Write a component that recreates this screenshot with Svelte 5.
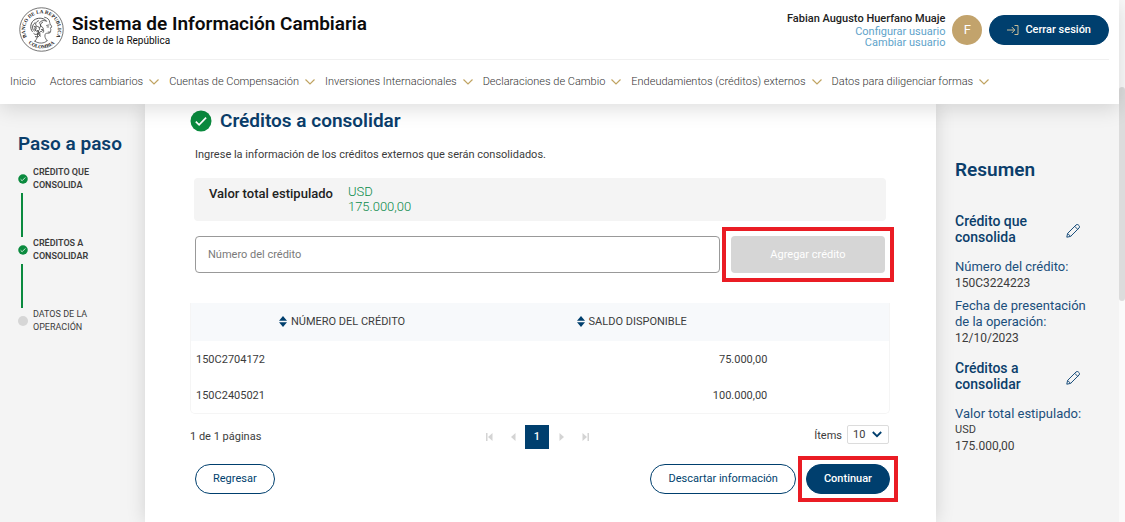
<script>
  const menu = [
    { label: 'Inicio', sub: false },
    { label: 'Actores cambiarios', sub: true },
    { label: 'Cuentas de Compensación', sub: true },
    { label: 'Inversiones Internacionales', sub: true },
    { label: 'Declaraciones de Cambio', sub: true },
    { label: 'Endeudamientos (créditos) externos', sub: true },
    { label: 'Datos para diligenciar formas', sub: true }
  ];

  const steps = [
    { lines: ['Crédito que', 'consolida'], done: true },
    { lines: ['Créditos a', 'consolidar'], done: true },
    { lines: ['Datos de la', 'operación'], done: false }
  ];

  const rows = [
    { id: '150C2704172', balance: '75.000,00' },
    { id: '150C2405021', balance: '100.000,00' }
  ];

  const summary = [
    {
      title: 'Crédito que consolida',
      items: [
        { label: 'Número del crédito:', values: ['150C3224223'] },
        { label: 'Fecha de presentación de la operación:', values: ['12/10/2023'] }
      ]
    },
    {
      title: 'Créditos a consolidar',
      items: [{ label: 'Valor total estipulado:', currency: 'USD', values: ['175.000,00'] }]
    }
  ];

  let creditNumber = $state('');
  let pageSize = $state('10');
</script>

{#snippet check()}
  <svg class="check" viewBox="0 0 22 22" aria-hidden="true">
    <circle cx="11" cy="11" r="10.5" fill="#0a8a3e" />
    <path d="M5.8 11.6l3.3 3.2 7-7.2" fill="none" stroke="#fff" stroke-width="1.7" />
  </svg>
{/snippet}

<div class="page">
  <div class="view">
    <header>
      <div class="top">
        <svg class="seal" viewBox="0 0 88 88" aria-hidden="true">
          <defs>
            <path id="arc-top" d="M15.500 59A32 32 0 1 1 72.500 59" />
            <path id="arc-low" d="M13 65A38 38 0 0 0 75 65" />
          </defs>
          <circle cx="44" cy="44" r="42.5" fill="#fff" stroke="#555" stroke-width="1.6" />
          <text class="seal-text"><textPath href="#arc-top" startOffset="50%" text-anchor="middle">BANCO DE LA REPUBLICA</textPath></text>
          <text class="seal-text"><textPath href="#arc-low" startOffset="50%" text-anchor="middle">COLOMBIA</textPath></text>
          <g fill="none" stroke="#444" stroke-width="1.5" stroke-linecap="round" stroke-linejoin="round">
            <path d="M50 20c6 1 10 5 10 10 0 3 4 7 4 9s-3 1-3 2 2 2 1 4c0 2 0 5-3 6-4 1-7-1-8 3s0 7 4 12" />
            <path d="M36 51c1 6 0 11-5 16M31 67c8 5 18 5 24-1" />
            <path d="M26 48c-6-7-3-20 6-24 8-4 18-2 22 4-6-3-12-1-14 3M31 31c-6 4-6 13-1 16M38 27c-7 2-7 10-2 11s6 7 1 9-9-5-4-9M46 30c-5 2-5 7-1 9s3 8-2 9-6 7-1 9M29 52c4 4 9 1 9-4M32 58c5 2 10-1 9-6M44 44c4-1 6 3 3 6M30 38c4 0 5 5 2 7M41 33c3 3 1 6-1 8M36 46c5 3 3 7 0 9" stroke-width="1.8" />
            <path d="M54 36l5-1M55 39l3 0M57 49l4 0" />
          </g>
          <circle cx="9" cy="57" r="1.3" fill="#333" /><circle cx="79" cy="57" r="1.3" fill="#333" />
        </svg>
        <div class="brand">
          <strong>Sistema de Información Cambiaria</strong>
          <span>Banco de la República</span>
        </div>
        <div class="user">
          <strong>Fabian Augusto Huerfano Muaje</strong>
          <a href="#configurar">Configurar usuario</a>
          <a href="#cambiar">Cambiar usuario</a>
        </div>
        <span class="avatar">F</span>
        <button class="pill solid logout" type="button">
          <svg viewBox="0 0 12 12" aria-hidden="true">
            <path d="M0 6h7.500M4.800 3l3 3-3 3M7.500 1.500h3.500v9H7.500" fill="none" stroke="#c9bd98" stroke-width="1" />
          </svg>
          Cerrar sesión
        </button>
      </div>
      <nav aria-label="Principal">
        {#each menu as item}
          <a href="#menu">
            {item.label}
            {#if item.sub}
              <svg viewBox="0 0 10 6" aria-hidden="true"><path d="M.5.5L5 5 9.500.5" fill="none" stroke="#c0a462" stroke-width="1.200" /></svg>
            {/if}
          </a>
        {/each}
      </nav>
    </header>

    <div class="body">
      <aside class="steps">
        <h2>Paso a paso</h2>
        <ol>
          {#each steps as step, i}
            <li class:done={step.done}>
              <div class="step">
                {#if step.done}{@render check()}{:else}<span class="dot"></span>{/if}
                <span>{step.lines[0]}<br />{step.lines[1]}</span>
              </div>
              {#if i < steps.length - 1}<div class="line"></div>{/if}
            </li>
          {/each}
        </ol>
      </aside>

      <main>
        <div class="title">
          {@render check()}
          <h1>Créditos a consolidar</h1>
        </div>
        <p class="intro">Ingrese la información de los créditos externos que serán consolidados.</p>

        <div class="total">
          <strong>Valor total estipulado</strong>
          <span>USD<br />175.000,00</span>
        </div>

        <form class="add" onsubmit={(e) => e.preventDefault()}>
          <input type="text" aria-label="Número del crédito" placeholder="Número del crédito" bind:value={creditNumber} />
          <div class="marked">
            <button type="submit" disabled={!creditNumber}>Agregar crédito</button>
          </div>
        </form>

        <div class="table">
          <table>
            <colgroup><col class="c1" /><col class="c2" /><col /></colgroup>
            <thead>
              <tr>
                {#each ['Número del crédito', 'Saldo disponible'] as name}
                  <th scope="col">
                    <button type="button">
                      <svg viewBox="0 0 8 11" aria-hidden="true"><path d="M4 0l4 4.800H0zM4 11l4-4.800H0z" fill="#003f6e" /></svg>
                      {name}
                    </button>
                  </th>
                {/each}
                <td></td>
              </tr>
            </thead>
            <tbody>
              {#each rows as row}
                <tr><td>{row.id}</td><td class="num">{row.balance}</td><td></td></tr>
              {/each}
            </tbody>
          </table>
        </div>

        <div class="paging">
          <span>1 de 1 páginas</span>
          <div class="pager">
            <button type="button" disabled aria-label="Primera página"><svg viewBox="0 0 7 8"><path d="M0 0h1.500v8H0zM6.500 0v8l-4.500-4z" /></svg></button>
            <button type="button" disabled aria-label="Página anterior"><svg viewBox="0 0 7 8"><path d="M5.500 0v8L1 4z" /></svg></button>
            <button type="button" class="current">1</button>
            <button type="button" disabled aria-label="Página siguiente"><svg viewBox="0 0 7 8"><path d="M1.500 0v8L6 4z" /></svg></button>
            <button type="button" disabled aria-label="Última página"><svg viewBox="0 0 7 8"><path d="M5.500 0H7v8H5.500zM.5 0v8L5 4z" /></svg></button>
          </div>
          <div class="size">
            <label for="size">Ítems</label>
            <div class="select">
              <select id="size" bind:value={pageSize}>
                <option>10</option>
                <option>20</option>
                <option>50</option>
              </select>
              <svg viewBox="0 0 10 7" aria-hidden="true"><path d="M.8 1L5 5.200 9.200 1" fill="none" stroke="#003f6e" stroke-width="1.800" /></svg>
            </div>
          </div>
        </div>

        <div class="actions">
          <button class="pill back" type="button">Regresar</button>
          <button class="pill" type="button">Descartar información</button>
          <div class="marked tight"><button class="pill solid" type="button">Continuar</button></div>
        </div>
      </main>

      <aside class="summary">
        <h2>Resumen</h2>
        {#each summary as group}
          <section>
            <div class="group">
              <h3>{group.title}</h3>
              <button type="button" aria-label="Editar">
                <svg viewBox="0 0 14 14" aria-hidden="true">
                  <path d="M.8 13.200l.8-3.800L10 1a1.700 1.700 0 0 1 2.400 0l.6.600a1.700 1.700 0 0 1 0 2.400L4.600 12.400zM8.700 2.300l3 3M1.600 9.400l3 3" fill="none" stroke="#1b4f7c" stroke-width="1" stroke-linejoin="round" />
                </svg>
              </button>
            </div>
            <dl>
              {#each group.items as item}
                <div>
                  <dt>{item.label}</dt>
                  {#if item.currency}<dd class="currency">{item.currency}</dd>{/if}
                  {#each item.values as value}<dd>{value}</dd>{/each}
                </div>
              {/each}
            </dl>
          </section>
        {/each}
      </aside>
    </div>
  </div>
  <div class="track"><div class="thumb"></div></div>
</div>

<style>
  :global(body) {
    margin: 0;
    font-family: Roboto, 'Liberation Sans', sans-serif;
    font-size: 11px;
    line-height: 16px;
    color: #3c3c3c;
    background: #fff;
  }
  * { box-sizing: border-box; }
  button, input, select { font: inherit; color: inherit; margin: 0; }
  button { border: 0; background: none; padding: 0; cursor: pointer; }
  h1, h2, h3, p, ol, dl, dd { margin: 0; padding: 0; }
  h1, h2 { color: #0b3e6b; font-size: 19px; line-height: 24px; font-weight: 600; }
  a { color: inherit; text-decoration: none; }
  svg { display: block; flex: none; }

  .page { display: flex; min-height: 100vh; }
  .view { flex: 1; min-width: 0; display: flex; flex-direction: column; }
  .track { width: 6px; background: #fafafa; padding-top: 87px; }
  .thumb { height: 214px; border-radius: 3px; background: #dcdcdc; }

  header {
    position: relative;
    z-index: 2;
    background: #fff;
    padding: 0 10px;
    box-shadow: 0 4px 20px rgba(0, 0, 0, 0.14);
  }
  .top {
    display: flex;
    align-items: center;
    height: 60px;
    padding-left: 9px;
    border-bottom: 1px solid #f0f0f0;
  }
  .seal { width: 45px; height: 45px; }
  .seal-text { font: bold 10px 'Liberation Serif', serif; fill: #222; }
  .brand { display: flex; flex-direction: column; margin: 0 auto 0 8px; color: #0c0c0c; }
  .brand strong { font-size: 19px; line-height: 22px; font-weight: 600; }
  .brand span { font-size: 10px; line-height: 12px; }
  .user { display: flex; flex-direction: column; text-align: right; line-height: 11px; color: #5ea3ca; }
  .user strong { font-weight: 500; line-height: 14px; color: #222; }
  .avatar {
    width: 30px;
    height: 30px;
    margin: 0 7px;
    border-radius: 50%;
    background: #c2a36c;
    color: #fff;
    font-size: 13px;
    line-height: 30px;
    text-align: center;
  }
  .pill {
    height: 30px;
    padding: 0 17px;
    border: 1px solid #003f6e;
    border-radius: 15px;
    background: #fff;
    color: #003f6e;
    white-space: nowrap;
  }
  .pill.solid { background: #003f6e; color: #fff; font-weight: 500; }
  .logout { display: flex; align-items: center; gap: 6px; }
  .logout svg { width: 12px; height: 12px; }

  nav { display: flex; gap: 10px; height: 44px; align-items: center; color: #333; font-weight: 300; }
  nav a { display: flex; align-items: center; gap: 6px; white-space: nowrap; }
  nav a:first-child { margin-right: 4px; }
  nav svg { width: 10px; height: 6px; }

  .body { flex: 1; display: grid; grid-template-columns: 145px minmax(0, 1fr) 183px; background: #f4f4f4; }

  .steps { padding: 28px 0 0 18px; }
  ol { list-style: none; margin-top: 10px; font-size: 9px; line-height: 13px; text-transform: uppercase; }
  .done { font-weight: 600; }
  .step { display: flex; align-items: center; gap: 5px; }
  .step .check, .dot { width: 10px; height: 10px; }
  .dot { border-radius: 50%; background: #d6d6d6; }
  .line { width: 2px; height: 44px; margin: 1px 0 0 3px; background: #0a8a3e; }

  main { background: #fff; padding: 5px 46px 20px 45px; box-shadow: 0 0 18px rgba(0, 0, 0, 0.14); }
  .title { display: flex; align-items: center; gap: 8px; }
  .title .check { width: 22px; height: 22px; }
  .intro { margin: 14px 5px 15px; }
  .total {
    display: flex;
    gap: 15px;
    margin: 0 4px;
    padding: 6px 15px 7px;
    border-radius: 4px;
    background: #f4f4f4;
    font-size: 13px;
    line-height: 15px;
    color: #0a8a4a;
    font-weight: 300;
  }
  .total strong { line-height: 20px; font-weight: 500; color: #222; }
  .add { display: flex; gap: 11px; margin: 15px 5px 30px; }
  .add input {
    flex: 1;
    min-width: 0;
    height: 37px;
    padding: 0 12px;
    border: 1px solid #999;
    border-radius: 4px;
    background: #fff;
    outline: none;
  }
  .add input::placeholder { color: #7a7a7a; opacity: 1; }
  .add button {
    width: 154px;
    height: 37px;
    border-radius: 4px;
    background: #003f6e;
    color: #fff;
  }
  .add button:disabled { background: #d6d6d6; }
  .marked { position: relative; }
  .marked::after {
    content: '';
    position: absolute;
    inset: -9px;
    border: 4px solid #ea1c24;
    pointer-events: none;
  }
  .marked.tight::after { inset: -8px; }

  .table { border: 1px solid #f5f5f5; border-top: 0; border-radius: 0 0 5px 5px; }
  table { width: 100%; border-collapse: collapse; table-layout: fixed; }
  .c1 { width: 43%; }
  .c2 { width: 40%; }
  thead { background: #f7f9fb; }
  thead tr { height: 38px; }
  tbody tr { height: 36px; }
  th, td { padding: 2px 3px 0 5px; font-weight: 400; }
  th button { display: inline-flex; align-items: center; gap: 4px; text-transform: uppercase; }
  th svg { width: 8px; height: 11px; }
  .num { text-align: right; }

  .paging { display: grid; grid-template-columns: 1fr auto 1fr; align-items: center; margin-top: 11px; }
  .pager { display: flex; padding-right: 6px; }
  .pager button { display: grid; place-items: center; width: 24px; height: 24px; }
  .pager svg { width: 7px; height: 8px; fill: #d4d4d4; }
  .pager .current { background: #003f6e; color: #fff; font-weight: 500; }
  .size { display: flex; justify-content: flex-end; align-items: flex-end; align-self: start; gap: 5px; padding-right: 1px; }
  .select { position: relative; }
  .select select {
    display: block;
    width: 42px;
    height: 19px;
    padding: 0 5px;
    appearance: none;
    border: 1px solid #dcdcdc;
    border-radius: 2px;
    background: #fff;
  }
  .select svg { position: absolute; right: 7px; top: 6px; width: 10px; height: 7px; pointer-events: none; }

  .actions { display: flex; gap: 10px; margin: 15px 0 0 5px; }
  .back { margin-right: auto; }

  .summary { padding: 54px 28px 20px 19px; }
  .summary h2 { margin-bottom: 31px; }
  .group { display: flex; justify-content: space-between; align-items: center; margin-bottom: 14px; }
  h3 { width: 84px; font-size: 14px; font-weight: 500; color: #0b3e6b; }
  .group button { padding: 4px 11px 0 0; }
  .group svg { width: 14px; height: 14px; }
  dl { margin-bottom: 14px; }
  dl div { margin-bottom: 7px; }
  dt { font-size: 13px; line-height: 16px; color: #1b4f7c; }
  dd { font-size: 12px; line-height: 16px; }
  .currency { font-size: 11px; }
</style>
